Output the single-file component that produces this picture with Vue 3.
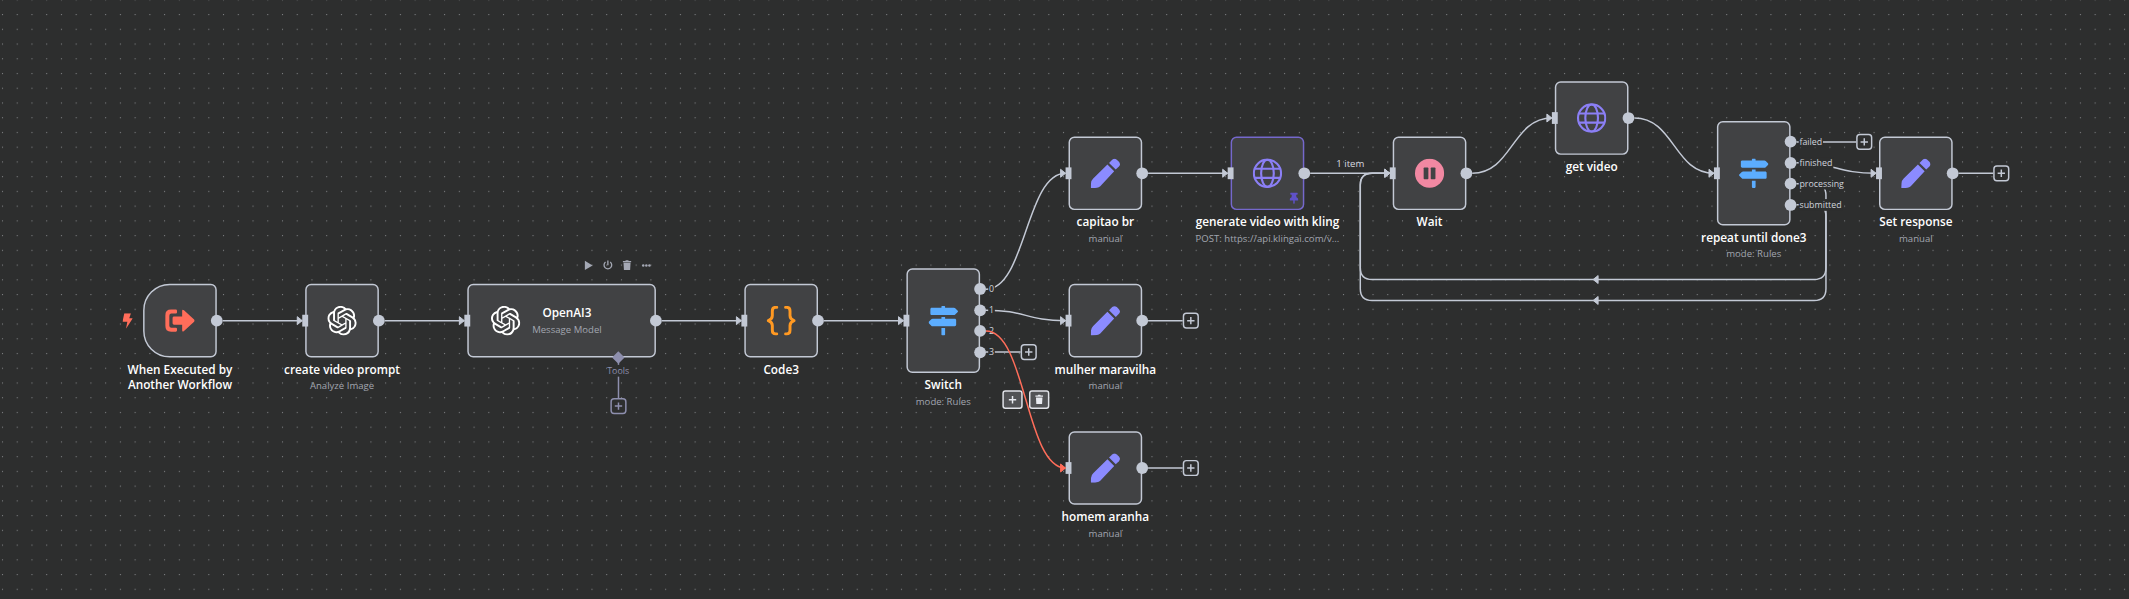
<script setup>
const OPENAI = 'M22.2819 9.8211a5.9847 5.9847 0 0 0-.5157-4.9108 6.0462 6.0462 0 0 0-6.5098-2.9A6.0651 6.0651 0 0 0 4.9807 4.1818a5.9847 5.9847 0 0 0-3.9977 2.9 6.0462 6.0462 0 0 0 .7427 7.0966 5.98 5.98 0 0 0 .511 4.9107 6.051 6.051 0 0 0 6.5146 2.9001A5.9847 5.9847 0 0 0 13.2599 24a6.0557 6.0557 0 0 0 5.7718-4.2058 5.9894 5.9894 0 0 0 3.9977-2.9001 6.0557 6.0557 0 0 0-.7475-7.0729zm-9.022 12.6081a4.4755 4.4755 0 0 1-2.8764-1.0408l.1419-.0804 4.7783-2.7582a.7948.7948 0 0 0 .3927-.6813v-6.7369l2.02 1.1686a.071.071 0 0 1 .038.052v5.5826a4.504 4.504 0 0 1-4.4945 4.4944zm-9.6607-4.1254a4.4708 4.4708 0 0 1-.5346-3.0137l.142.0852 4.783 2.7582a.7712.7712 0 0 0 .7806 0l5.8428-3.3685v2.3324a.0804.0804 0 0 1-.0332.0615L9.74 19.9502a4.4992 4.4992 0 0 1-6.1408-1.6464zM2.3408 7.8956a4.485 4.485 0 0 1 2.3655-1.9728V11.6a.7664.7664 0 0 0 .3879.6765l5.8144 3.3543-2.0201 1.1685a.0757.0757 0 0 1-.071 0l-4.8303-2.7865A4.504 4.504 0 0 1 2.3408 7.872zm16.5963 3.8558L13.1038 8.364 15.1192 7.2a.0757.0757 0 0 1 .071 0l4.8303 2.7913a4.4944 4.4944 0 0 1-.6765 8.1042v-5.6772a.79.79 0 0 0-.407-.667zm2.0107-3.0231l-.142-.0852-4.7735-2.7818a.7759.7759 0 0 0-.7854 0L9.409 9.2297V6.8974a.0662.0662 0 0 1 .0284-.0615l4.8303-2.7866a4.4992 4.4992 0 0 1 6.6802 4.66zM8.3065 12.863l-2.02-1.1638a.0804.0804 0 0 1-.038-.0567V6.0742a4.4992 4.4992 0 0 1 7.3757-3.4537l-.142.0805L8.704 5.459a.7948.7948 0 0 0-.3927.6813zm1.0976-2.3654l2.602-1.4998 2.6069 1.4998v2.9994l-2.5974 1.4997-2.6067-1.4997Z'
const SIGNS = 'M507.31 84.69L464 41.37c-6-6-14.14-9.37-22.63-9.37H288V16c0-8.84-7.16-16-16-16h-32c-8.84 0-16 7.16-16 16v16H56c-13.25 0-24 10.75-24 24v80c0 13.25 10.75 24 24 24h385.37c8.49 0 16.62-3.37 22.63-9.37l43.31-43.31c6.25-6.26 6.25-16.38 0-22.63zM224 496c0 8.84 7.16 16 16 16h32c8.84 0 16-7.16 16-16V384h-64v112zm232-272H288v-32h-64v32H70.63c-8.49 0-16.62 3.37-22.63 9.37L4.69 276.69c-6.25 6.25-6.25 16.38 0 22.63L48 342.63c6 6 14.14 9.37 22.63 9.37H456c13.25 0 24-10.75 24-24v-80c0-13.25-10.75-24-24-24z'
const THUMBTACK = 'M298.028 214.267L285.793 96H328c13.255 0 24-10.745 24-24V24c0-13.255-10.745-24-24-24H56C42.745 0 32 10.745 32 24v48c0 13.255 10.745 24 24 24h42.207L85.972 214.267C37.465 236.82 0 277.261 0 328c0 13.255 10.745 24 24 24h136v104.007c0 1.242.289 2.467.845 3.578l24 48c2.941 5.882 11.364 5.893 14.311 0l24-48a8.008 8.008 0 0 0 .845-3.578V352h136c13.255 0 24-10.745 24-24-.001-51.183-37.983-91.42-85.973-113.733z'

// Node positions are in canvas units; the viewport applies pan and zoom.
const nodes = [
  { id: 'trigger', x: 0, y: 0, icon: 'exit', title: 'When Executed by Another Workflow', trigger: true },
  { id: 'prompt', x: 220, y: 0, icon: 'openai', title: 'create video prompt', sub: 'Analyze Image' },
  { id: 'openai', x: 440, y: 0, w: 256, icon: 'openai', title: 'OpenAI3', sub: 'Message Model', wide: true },
  { id: 'code', x: 816, y: 0, icon: 'braces', title: 'Code3' },
  { id: 'switch', x: 1036, y: -21, h: 142, icon: 'signs', title: 'Switch', sub: 'mode: Rules', outputs: ['0', '1', '2', '3'] },
  { id: 'capitao', x: 1256, y: -200, icon: 'pen', title: 'capitao br', sub: 'manual' },
  { id: 'mulher', x: 1256, y: 0, icon: 'pen', title: 'mulher maravilha', sub: 'manual', plus: true },
  { id: 'homem', x: 1256, y: 200, icon: 'pen', title: 'homem aranha', sub: 'manual', plus: true },
  { id: 'kling', x: 1476, y: -200, icon: 'globe', title: 'generate video with kling', sub: 'POST: https://api.klingai.com/v...', pinned: true },
  { id: 'wait', x: 1696, y: -200, icon: 'pause', title: 'Wait' },
  { id: 'get', x: 1916, y: -275, icon: 'globe', title: 'get video' },
  { id: 'repeat', x: 2136, y: -221, h: 142, icon: 'signs', title: 'repeat until done3', sub: 'mode: Rules', outputs: ['failed', 'finished', 'processing', 'submitted'] },
  { id: 'response', x: 2356, y: -200, icon: 'pen', title: 'Set response', sub: 'manual', plus: true },
].map((n) => ({ w: 100, h: 100, outputs: [''], ...n }))

const byId = Object.fromEntries(nodes.map((n) => [n.id, n]))
const outTop = (n, i) => ((i + 1) * n.h) / (n.outputs.length + 1)
const outY = (n, i) => n.y + outTop(n, i)

function bezier(from, port, to) {
  const a = byId[from]
  const b = byId[to]
  const x1 = a.x + a.w + 8
  const y1 = outY(a, port)
  const x2 = b.x - 4
  const y2 = b.y + b.h / 2
  const mx = (x1 + x2) / 2
  return `M${x1},${y1} C${mx},${y1} ${mx},${y2} ${x2},${y2}`
}

function loopBack(from, port, to) {
  const a = byId[from]
  const b = byId[to]
  const x1 = a.x + a.w + 8
  const y1 = outY(a, port)
  const x2 = b.x - 4
  const y2 = b.y + b.h / 2
  const rx = x1 + 40
  const lx = x2 - 40
  const by = y1 + 130
  const mid = (rx + lx) / 2
  return [
    `M${x1},${y1} H${rx - 16} Q${rx},${y1} ${rx},${y1 + 16} V${by - 16} Q${rx},${by} ${rx - 16},${by} H${mid}`,
    `M${mid},${by} H${lx + 16} Q${lx},${by} ${lx},${by - 16} V${y2 + 16} Q${lx},${y2} ${lx + 16},${y2} H${x2}`,
  ]
}

const edges = [
  bezier('trigger', 0, 'prompt'),
  bezier('prompt', 0, 'openai'),
  bezier('openai', 0, 'code'),
  bezier('code', 0, 'switch'),
  bezier('switch', 0, 'capitao'),
  bezier('switch', 1, 'mulher'),
  bezier('capitao', 0, 'kling'),
  bezier('kling', 0, 'wait'),
  bezier('wait', 0, 'get'),
  bezier('get', 0, 'repeat'),
  bezier('repeat', 1, 'response'),
  ...loopBack('repeat', 2, 'wait'),
  ...loopBack('repeat', 3, 'wait'),
]
const activeEdge = bezier('switch', 2, 'homem')

const pluses = [
  ...nodes.filter((n) => n.plus).map((n) => ({ x: n.x + 108, y: n.y + 50, len: 46 })),
  { x: 1144, y: outY(byId.switch, 3), len: 46 },
  { x: 2244, y: outY(byId.repeat, 0), len: 80 },
]
</script>

<template>
  <main class="canvas">
    <svg class="dots" width="2129" height="599">
      <pattern id="dot-grid" width="14.737" height="14.737" patternUnits="userSpaceOnUse" x="-4.9" y="-7.6">
        <circle cx="7.4" cy="7.4" r="0.6" />
      </pattern>
      <rect width="2129" height="599" fill="url(#dot-grid)" />
    </svg>

    <div class="viewport">
      <svg class="edges">
        <defs>
          <marker id="arrow" viewBox="-10 -10 20 20" refX="0" refY="0" markerWidth="13.5" markerHeight="13.5" orient="auto-start-reverse">
            <polyline class="arrow" points="-5,-4 0,0 -5,4 -5,-4" />
          </marker>
        </defs>
        <path v-for="(d, i) in edges" :key="i" class="edge" :d="d" marker-end="url(#arrow)" />
        <path v-for="(p, i) in pluses" :key="'p' + i" class="edge" :d="`M${p.x},${p.y} h${p.len + 1}`" />
        <path class="edge tool" d="M645.2,106 V155" />
      </svg>

      <section
        v-for="n in nodes"
        :key="n.id"
        class="node"
        :class="{ trigger: n.trigger, wide: n.wide, pinned: n.pinned }"
        :style="{ left: n.x + 'px', top: n.y + 'px', width: n.w + 'px', height: n.h + 'px' }"
      >
        <svg v-if="n.icon === 'openai'" class="icon" viewBox="0 0 24 24"><path fill="#fff" :d="OPENAI" /></svg>
        <svg v-else-if="n.icon === 'signs'" class="icon" viewBox="0 0 512 512"><path fill="#5cadff" :d="SIGNS" /></svg>
        <svg v-else-if="n.icon === 'pen'" class="icon" viewBox="0 0 40 40">
          <g fill="#8b8bff">
            <path d="M22.8 8 32 17.2 15 35.4 Q11.5 39.8 6 39.9 L1 40 Q.1 40 .2 39 L.5 33.5 Q.8 29.8 3.5 27.2Z" />
            <path d="M25 5.9 29.3 1.6 Q32.4 -.9 35.5 1.6 L38.4 4.5 Q41.2 7.6 38.4 10.7 L34.1 15Z" />
          </g>
        </svg>
        <svg v-else-if="n.icon === 'globe'" class="icon" viewBox="0 0 40 40">
          <g fill="none" stroke="#8b7ff5" stroke-width="2.9">
            <circle cx="20" cy="20" r="18.5" />
            <ellipse cx="20" cy="20" rx="8.6" ry="18.5" />
            <path d="M3 13.8H37M3 26.2H37" />
          </g>
        </svg>
        <svg v-else-if="n.icon === 'pause'" class="icon" viewBox="0 0 40 40">
          <circle cx="20" cy="20" r="19.8" fill="#f188a2" />
          <rect x="12" y="12.2" width="6.4" height="15.8" rx="1" fill="#414244" />
          <rect x="21.6" y="12.2" width="6.4" height="15.8" rx="1" fill="#414244" />
        </svg>
        <svg v-else-if="n.icon === 'braces'" class="icon" viewBox="0 0 40 40">
          <g fill="none" stroke="#ff9922" stroke-width="4" stroke-linecap="round" stroke-linejoin="round">
            <path d="M14 2H12.5Q8 2 8 7V13.5Q8 18 2.5 20Q8 22 8 26.5V33Q8 38 12.5 38H14" />
            <path d="M26 2H27.5Q32 2 32 7V13.5Q32 18 37.5 20Q32 22 32 26.5V33Q32 38 27.5 38H26" />
          </g>
        </svg>
        <svg v-else class="icon" viewBox="0 0 40 40">
          <g fill="#ff6d5a">
            <path d="M14.5 5H8Q0 5 0 13V27Q0 35 8 35H14.5Q16 35 16 33.5V31Q16 29.6 14.5 29.6H8.5Q5.6 29.6 5.6 26.8V13.2Q5.6 10.4 8.5 10.4H14.5Q16 10.4 16 9V6.5Q16 5 14.5 5Z" />
            <path d="M12 14.5H23V7Q23 4 25.5 6L39.2 18.4Q40.8 20 39.2 21.6L25.5 34Q23 36 23 33V25.5H12Q10 25.5 10 23.5V16.5Q10 14.5 12 14.5Z" />
          </g>
        </svg>

        <svg v-if="n.pinned" class="pin" viewBox="0 0 384 512"><path :d="THUMBTACK" /></svg>
        <svg v-if="n.trigger" class="bolt" viewBox="0 0 14 21"><path d="M2.5 0H11.5L9.2 6.6H14L4.8 21 6.6 11.5H0Z" /></svg>

        <header class="label">
          <div class="title">{{ n.title }}</div>
          <div v-if="n.sub" class="sub">{{ n.sub }}</div>
        </header>

        <span v-if="!n.trigger" class="input"></span>
        <template v-for="(o, i) in n.outputs" :key="i">
          <span class="output" :style="{ top: outTop(n, i) + 'px' }"></span>
          <span v-if="o" class="port" :style="{ top: outTop(n, i) + 'px' }">{{ o }}</span>
        </template>
      </section>

      <span class="diamond"></span>
      <span class="tools">Tools</span>
      <span class="items">1 item</span>

      <svg class="edges top">
        <defs>
          <marker id="arrow-active" viewBox="-10 -10 20 20" refX="0" refY="0" markerWidth="13.5" markerHeight="13.5" orient="auto">
            <polyline class="arrow active" points="-5,-4 0,0 -5,4 -5,-4" />
          </marker>
        </defs>
        <g v-for="(p, i) in pluses" :key="i" class="plus" :transform="`translate(${p.x + p.len},${p.y - 12})`">
          <rect x="2" y="2" width="20" height="20" rx="4" />
          <path d="M7 12H17M12 7V17" />
        </g>
        <g class="plus tool" transform="translate(633.2,154)">
          <rect x="2" y="2" width="20" height="20" rx="4" />
          <path d="M7 12H17M12 7V17" />
        </g>
        <g class="edge-button" transform="translate(1166.2,144.6)">
          <rect x="1" y="1" width="25.6" height="23.4" rx="3" />
          <path class="glyph" d="M8.8 12.7H18.8M13.8 7.7V17.7" />
        </g>
        <g class="edge-button" transform="translate(1202.4,144.6)">
          <rect x="1" y="1" width="25.6" height="23.4" rx="3" />
          <path class="solid" d="M8.6 7H11.8L12.4 6H15.2L15.8 7H19V8.8H8.6ZM9.4 9.6H18.2L17.7 18.6H9.9Z" />
        </g>
        <path class="edge active" :d="activeEdge" marker-end="url(#arrow-active)" />
        <g class="toolbar">
          <path d="M599.6 -31.2 610 -25 599.6 -18.6Z" />
          <path class="line" d="M627.6 -29.6A5.2 5.2 0 1 0 634 -29.6M630.8 -31.6V-25.2" />
          <path d="M651.2 -31H654.4L655.2 -32H658.4L659.2 -31H662.4V-29.2H651.2ZM652 -28.4H661.6L661 -18.6H652.6Z" />
          <circle cx="678.8" cy="-25" r="1.7" />
          <circle cx="683" cy="-25" r="1.7" />
          <circle cx="687.2" cy="-25" r="1.7" />
        </g>
      </svg>
    </div>
  </main>
</template>

<style>
body {
  margin: 0;
  background: #2d2e2e;
}
</style>

<style scoped>
.canvas {
  position: relative;
  width: 2129px;
  height: 599px;
  overflow: hidden;
  background: #2d2e2e;
  font-family: 'Open Sans', sans-serif;
}
.dots {
  position: absolute;
  inset: 0;
  fill: #8b8d90;
}
.viewport {
  position: absolute;
  left: 0;
  top: 0;
  transform-origin: 0 0;
  transform: translate(143.1px, 283.8px) scale(0.7368);
}
.edges {
  position: absolute;
  left: 0;
  top: 0;
  width: 1px;
  height: 1px;
  overflow: visible;
}
.edge {
  fill: none;
  stroke: #c3c9d5;
  stroke-width: 2;
}
.arrow {
  fill: #c3c9d5;
  stroke: #c3c9d5;
  stroke-width: 1;
  stroke-linejoin: round;
}
.edge.tool {
  stroke: #8e8fae;
}
.edge.active {
  stroke: #ff6d5a;
}
.arrow.active {
  fill: #ff6d5a;
  stroke: #ff6d5a;
}
.node {
  position: absolute;
  box-sizing: border-box;
  display: flex;
  align-items: center;
  justify-content: center;
  border: 2px solid #c3c9d5;
  border-radius: 8px;
  background: #414244;
}
.node.trigger {
  border-radius: 36px 8px 8px 36px;
}
.node.pinned {
  border-color: #7568cc;
}
.icon {
  flex: none;
  width: 40px;
  height: 40px;
}
.wide {
  justify-content: flex-start;
  gap: 16px;
  padding-left: 30px;
}
.label {
  position: absolute;
  top: 100%;
  left: 50%;
  width: 200px;
  margin-top: 8.2px;
  transform: translateX(-50%);
  text-align: center;
}
.trigger .label {
  width: 156px;
}
.wide .label {
  position: static;
  width: auto;
  margin: 1px 0 0;
  transform: none;
}
.title {
  color: #fff;
  font-size: 16px;
  font-weight: 600;
  line-height: 20.8px;
}
.sub {
  margin-top: 1.4px;
  color: #a2a6b0;
  font-size: 13px;
  line-height: 20px;
  white-space: nowrap;
}
.input {
  position: absolute;
  left: -6px;
  top: 50%;
  width: 8px;
  height: 16px;
  transform: translateY(-50%);
  background: #c3c9d5;
}
.output {
  position: absolute;
  right: -10px;
  width: 16px;
  height: 16px;
  margin-top: -10px;
  border-radius: 50%;
  background: #c3c9d5;
}
.port {
  position: absolute;
  left: calc(100% + 13px);
  margin-top: -10px;
  padding: 0 1px;
  background: #2d2e2e;
  color: #d0d3dc;
  font-size: 12px;
  line-height: 16px;
}
.pin {
  position: absolute;
  right: 6px;
  bottom: 6px;
  width: 12px;
  height: 16px;
  fill: #5f51c8;
}
.bolt {
  position: absolute;
  left: -30.5px;
  top: 38px;
  width: 14px;
  height: 21px;
  fill: #ff6d5a;
}
.diamond {
  position: absolute;
  left: 639.2px;
  top: 93.5px;
  width: 12px;
  height: 12px;
  transform: rotate(45deg);
  background: #8e8fae;
}
.tools {
  position: absolute;
  left: 644.8px;
  top: 110px;
  transform: translateX(-50%);
  background: #2d2e2e;
  color: #8e8fae;
  font-size: 12px;
  line-height: 16px;
}
.items {
  position: absolute;
  left: 1638.5px;
  top: -173px;
  transform: translateX(-50%);
  color: #d8dae0;
  font-size: 13px;
  line-height: 20px;
  white-space: nowrap;
}
.plus {
  fill: none;
  stroke: #c3c9d5;
  stroke-width: 2;
}
.plus rect {
  fill: #2d2e2e;
}
.plus.tool {
  stroke: #8e8fae;
}
.edge-button rect {
  fill: #525356;
  stroke: #e2e4ea;
  stroke-width: 2;
}
.edge-button .glyph {
  stroke: #e8eaf0;
  stroke-width: 2;
}
.edge-button .solid {
  fill: #e8eaf0;
}
.toolbar {
  fill: #a4a8b4;
}
.toolbar .line {
  fill: none;
  stroke: #a4a8b4;
  stroke-width: 1.8;
}
</style>
